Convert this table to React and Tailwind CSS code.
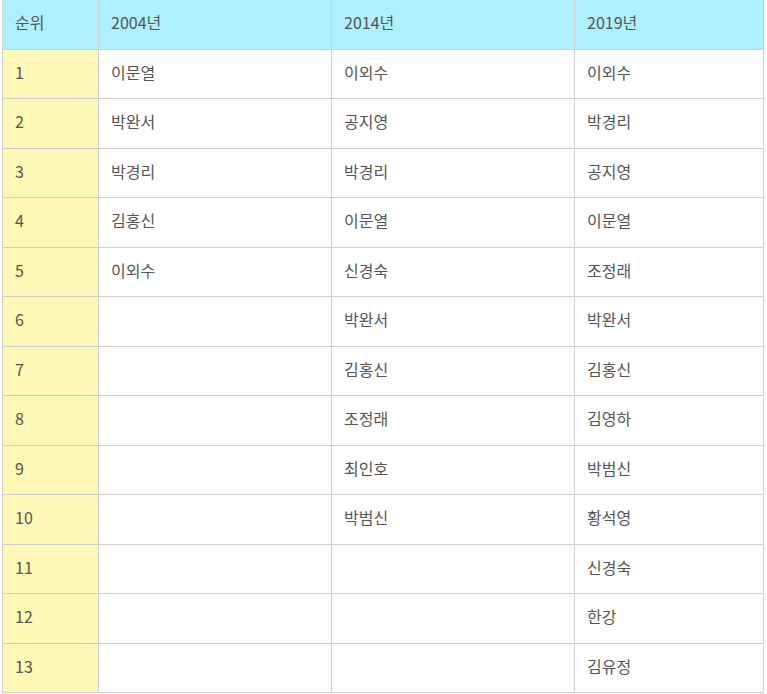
import React from 'react';

const rows = [
  ['1', '이문열', '이외수', '이외수'],
  ['2', '박완서', '공지영', '박경리'],
  ['3', '박경리', '박경리', '공지영'],
  ['4', '김홍신', '이문열', '이문열'],
  ['5', '이외수', '신경숙', '조정래'],
  ['6', '', '박완서', '박완서'],
  ['7', '', '김홍신', '김홍신'],
  ['8', '', '조정래', '김영하'],
  ['9', '', '최인호', '박범신'],
  ['10', '', '박범신', '황석영'],
  ['11', '', '', '신경숙'],
  ['12', '', '', '한강'],
  ['13', '', '', '김유정'],
];

const cell = 'border border-[#d0d0d0] px-3 pb-[4px] text-left align-middle font-normal';

export default function App() {
  return (
    <div className="bg-white min-h-screen pl-[2px] -mt-px" style={{ fontFamily: '"Noto Sans CJK KR", "Noto Sans", sans-serif' }}>
      <table className="border-collapse table-fixed w-[761px] text-[16px] text-[#555]">
        <colgroup>
          <col className="w-[96px]" />
          <col className="w-[233px]" />
          <col className="w-[243px]" />
          <col className="w-[189px]" />
        </colgroup>
        <thead>
          <tr className="h-[49.5px] bg-[#aff0ff]">
            <th className={cell}>순위</th>
            <th className={cell}>2004년</th>
            <th className={cell}>2014년</th>
            <th className={cell}>2019년</th>
          </tr>
        </thead>
        <tbody>
          {rows.map((r) => (
            <tr key={r[0]} className="h-[49.5px]">
              <td className={`${cell} bg-[#fff8b6]`}>{r[0]}</td>
              <td className={cell}>{r[1]}</td>
              <td className={cell}>{r[2]}</td>
              <td className={cell}>{r[3]}</td>
            </tr>
          ))}
        </tbody>
      </table>
    </div>
  );
}
